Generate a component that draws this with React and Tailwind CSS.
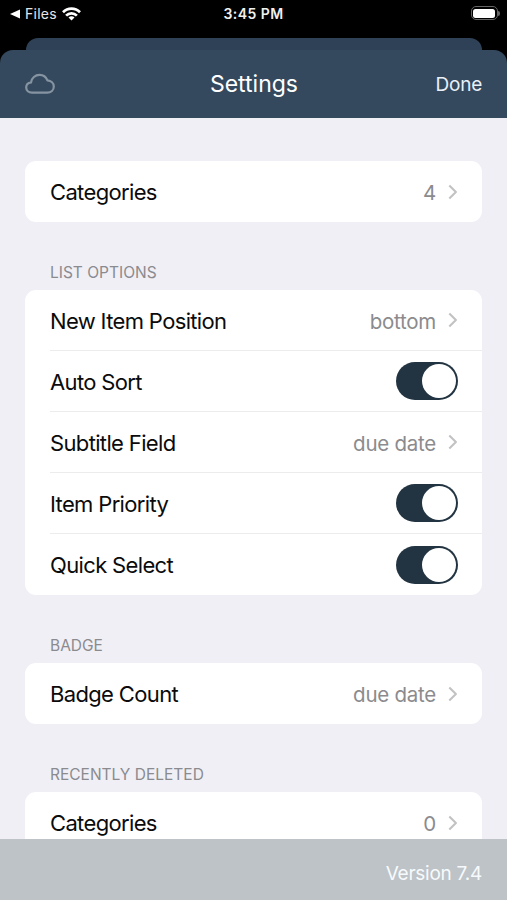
import React from "react";

const Chevron = () => (
  <svg className="ml-[12px] h-[16px] w-[10px] shrink-0" viewBox="0 0 10 16" fill="none" stroke="#c2c2c4" strokeWidth="2.1" strokeLinejoin="round">
    <path d="M1.3 1.5 7.9 8 1.3 14.5" />
  </svg>
);

const Toggle = () => (
  <div className="flex h-[38px] w-[62.5px] items-center justify-end rounded-full bg-[#223442] pr-[2px]">
    <div className="size-[34px] rounded-full bg-white" />
  </div>
);

const Row = ({ label, value, divider }) => (
  <div className="flex h-[61px] shrink-0 pl-[25px]">
    <div className={"flex flex-1 items-center justify-between pr-[24px] " + (divider ? "border-b border-[#ececee]" : "")}>
      <span className="pt-px text-[22px] leading-[28px] tracking-[-0.65px] text-[#0b0b0b]">{label}</span>
      {value === undefined ? (
        <Toggle />
      ) : (
        <span className="flex items-center">
          <span className="pt-[3px] text-[20.5px] leading-[26px] tracking-[-0.25px] text-[#8b8b8e]">{value}</span>
          <Chevron />
        </span>
      )}
    </div>
  </div>
);

const Card = ({ children }) => <div className="flex shrink-0 flex-col rounded-[11px] bg-white">{children}</div>;

const Heading = ({ children }) => (
  <h2 className="flex h-[68px] shrink-0 items-end pb-[7.5px] pl-[25px] text-[15.5px] leading-[20px] tracking-[0px] text-[#8a8a8f]">{children}</h2>
);

export default function App() {
  return (
    <div className="flex h-[900px] w-[507px] flex-col overflow-hidden bg-black font-['Inter',sans-serif]">
      <div className="grid h-[38px] shrink-0 grid-cols-3 items-start px-[10px] pt-[5px] text-white">
        <div className="flex h-[18px] items-center">
          <svg className="h-[10px] w-[10px]" viewBox="0 0 10 10" fill="white">
            <path d="M0 5 10 .5v9z" />
          </svg>
          <span className="ml-[5px] text-[14px] leading-[18px] tracking-[0.25px] text-[#e6e6e6]">Files</span>
          <svg className="ml-[5px] h-[14px] w-[19px]" viewBox="0 0 19 14" fill="none" stroke="white" strokeWidth="2.7">
            <path d="M1 5.2C5.8.3 13.2.3 18 5.2" />
            <path d="M4.1 8.6c3-3.1 7.8-3.1 10.8 0" />
            <path d="m9.5 13.6-3-3.1c1.7-1.6 4.3-1.6 6 0z" fill="white" stroke="none" />
          </svg>
        </div>
        <div className="text-center text-[14px] font-semibold leading-[18px] tracking-[0.45px] text-[#f0f0f0]">3:45 PM</div>
        <div className="-mr-[3px] flex items-center justify-end pt-[1px]">
          <div className="h-[14px] w-[27px] rounded-[5px] border border-[#656565] p-[1.5px]">
            <div className="h-full rounded-[2.5px] bg-white" />
          </div>
          <div className="h-[5px] w-[2px] rounded-r-full bg-[#656565]" />
        </div>
      </div>
      <div className="mx-[25.5px] h-[12px] shrink-0 rounded-t-[12px] bg-[#2e4156]" />
      <div className="flex min-h-0 flex-1 flex-col">
        <header className="grid h-[68px] shrink-0 grid-cols-3 items-center rounded-t-[13px] bg-[#34495e] px-[25px] text-white">
          <svg className="h-[22px] w-[30px]" viewBox="0 0 30 22" fill="none" stroke="#8694a2" strokeWidth="2.2" strokeLinejoin="round">
            <path d="M7 19.6c-3.4 0-5.8-2.2-5.8-5.1 0-2.7 1.8-4.7 4.8-5C6.6 5 10.2 1.9 14.6 1.9c3.5 0 6.4 1.9 7.8 5.4 3.7.2 6.4 2.8 6.4 6.1 0 3.6-2.8 6.2-6.6 6.2z" />
          </svg>
          <h1 className="-mt-px pl-px text-center text-[23px] leading-[28px] tracking-[0px]">Settings</h1>
          <div className="pt-[2px] text-right text-[19px] leading-[24px] tracking-[-0.25px] text-[#e9f0f8]">Done</div>
        </header>
        <main className="flex min-h-0 flex-1 flex-col overflow-hidden bg-[#f0eff5] px-[25px] pt-[43px]">
          <Card>
            <Row label="Categories" value="4" />
          </Card>
          <Heading>LIST OPTIONS</Heading>
          <Card>
            <Row label="New Item Position" value="bottom" divider />
            <Row label="Auto Sort" divider />
            <Row label="Subtitle Field" value="due date" divider />
            <Row label="Item Priority" divider />
            <Row label="Quick Select" />
          </Card>
          <Heading>BADGE</Heading>
          <Card>
            <Row label="Badge Count" value="due date" />
          </Card>
          <Heading>RECENTLY DELETED</Heading>
          <Card>
            <Row label="Categories" value="0" />
          </Card>
        </main>
        <footer className="flex h-[61px] shrink-0 items-center justify-end bg-[#bdc3c7] pr-[25px] pt-[9px] text-[19px] leading-[24px] tracking-[-0.25px] text-[#f7fafc]">
          Version 7.4
        </footer>
      </div>
    </div>
  );
}
